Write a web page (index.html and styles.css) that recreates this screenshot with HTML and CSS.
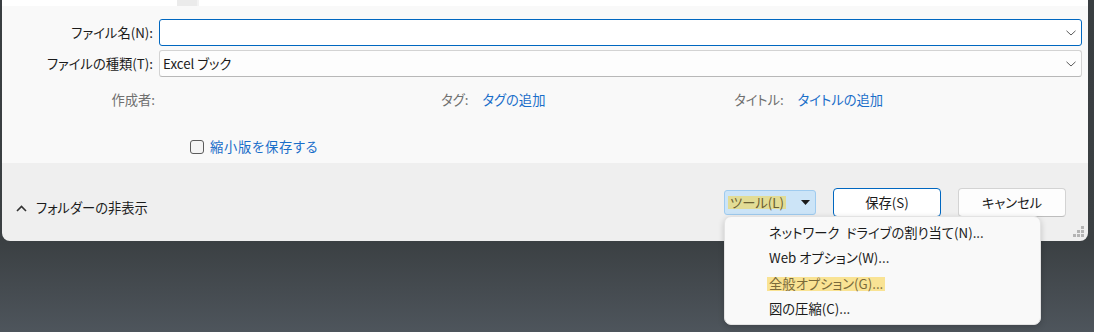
FILE: index.html
```html
<!DOCTYPE html>
<html lang="ja">
<head>
<meta charset="utf-8">
<title>名前を付けて保存</title>
<link rel="stylesheet" href="styles.css">
</head>
<body>
<div class="window">
  <div class="topstrip">
    <div class="ts-white"></div><div class="ts-thumb"></div><div class="ts-line"></div><div class="ts-rest"></div>
  </div>
  <div class="panel">
    <div class="field-row">
      <label class="field-label">ファイル名(N):</label>
      <div class="combo focused">
        <span class="combo-text"></span>
        <svg class="chev" width="10" height="6" viewBox="0 0 10 6"><path d="M0.5 0.8 L5 5 L9.5 0.8" fill="none" stroke="#5a5a5a" stroke-width="1"/></svg>
      </div>
    </div>
    <div class="field-row">
      <label class="field-label">ファイルの種類(T):</label>
      <div class="combo">
        <span class="combo-text">Excel ブック</span>
        <svg class="chev" width="10" height="6" viewBox="0 0 10 6"><path d="M0.5 0.8 L5 5 L9.5 0.8" fill="none" stroke="#5a5a5a" stroke-width="1"/></svg>
      </div>
    </div>
    <div class="meta-row">
      <span class="meta-label first">作成者:</span>
      <span class="meta-empty"></span>
      <span class="meta-group"><span class="meta-label">タグ:</span><span class="link">タグの追加</span></span>
      <span class="meta-group"><span class="meta-label">タイトル:</span><span class="link">タイトルの追加</span></span>
    </div>
    <div class="thumb-row">
      <span class="checkbox"></span><span class="link thumb-link">縮小版を保存する</span>
    </div>
  </div>
  <div class="footer">
    <div class="toggle">
      <svg class="chev-up" width="11" height="7" viewBox="0 0 11 7"><path d="M1 6 L5.5 1.5 L10 6" fill="none" stroke="#333" stroke-width="1.6"/></svg>
      <span>フォルダーの非表示</span>
    </div>
    <div class="actions">
      <div class="tools-wrap">
        <div class="tools">
          <span class="hl-tools">ツール(L)</span>
          <svg class="tri" width="9" height="5" viewBox="0 0 9 5"><path d="M0 0 H9 L4.5 5 Z" fill="#1a1a1a"/></svg>
        </div>
        <div class="menu">
          <div class="menu-item">ネットワーク&ensp;ドライブの割り当て(N)...</div>
          <div class="menu-item">Web オプション(W)...</div>
          <div class="menu-item"><span class="hl-menu">全般オプション(G)...</span></div>
          <div class="menu-item">図の圧縮(C)...</div>
        </div>
      </div>
      <div class="btn primary">保存(S)</div>
      <div class="btn">キャンセル</div>
    </div>
  </div>
  <svg class="grip" width="14" height="12" viewBox="0 0 14 12">
    <rect x="10" y="0" width="3" height="3" fill="#b4b4b4"/>
    <rect x="6" y="4" width="3" height="3" fill="#b4b4b4"/>
    <rect x="10" y="4" width="3" height="3" fill="#b4b4b4"/>
    <rect x="2" y="8" width="3" height="3" fill="#b4b4b4"/>
    <rect x="6" y="8" width="3" height="3" fill="#b4b4b4"/>
    <rect x="10" y="8" width="3" height="3" fill="#b4b4b4"/>
  </svg>
</div>
</body>
</html>
```

FILE: styles.css
```css
* { box-sizing: border-box; }

html, body { height: 100%; }

body {
  margin: 0;
  width: 1094px;
  height: 332px;
  overflow: hidden;
  background: linear-gradient(180deg, #393e41 0px, #3b4043 242px, #4e555c 332px);
  font-family: "Noto Sans CJK JP", "Noto Sans", sans-serif;
  font-size: 13.3px;
  font-feature-settings: "palt";
  color: #1b1b1b;
}

.window {
  position: relative;
  margin-left: 2px;
  width: 1086px;
  height: 241px;
  display: flex;
  flex-direction: column;
}

/* top strip (bottom of file list) */
.topstrip {
  display: flex;
  height: 6px;
  background: #ffffff;
}
.ts-white { width: 175px; }
.ts-thumb { width: 20px; background: #ebebeb; }
.ts-line { width: 2px; background: #f3f3f3; }
.ts-rest { flex: 1; }

/* form panel */
.panel {
  height: 157px;
  background: #f9f9f9;
  padding: 13px 6px 0 0;
  display: flex;
  flex-direction: column;
}

.field-row {
  display: flex;
  align-items: center;
  gap: 6px;
  margin-bottom: 4px;
}

.field-label {
  width: 151px;
  text-align: right;
  line-height: 20px;
  white-space: nowrap;
}

.combo {
  flex: 1;
  height: 27px;
  display: flex;
  align-items: center;
  justify-content: space-between;
  background: #fdfdfd;
  border: 1px solid #d3d3d3;
  border-bottom-color: #b8b8b8;
  border-radius: 3px;
  padding: 0 5px 0 3px;
}
.combo.focused {
  background: #ffffff;
  border-color: #0067c0;
}
.combo-text {
  line-height: 20px;
  color: #1b1b1b;
}
.chev { display: block; }

.meta-row {
  display: grid;
  grid-template-columns: 153px 286px 293px 1fr;
  margin-top: 9px;
  line-height: 20px;
  color: #707070;
}
.meta-label { white-space: nowrap; }
.meta-label.first { text-align: right; }
.meta-group {
  display: flex;
  gap: 14px;
}
.link { color: #1a6ec9; white-space: nowrap; }

.thumb-row {
  display: flex;
  align-items: center;
  gap: 6px;
  margin-top: 27px;
  padding-left: 188px;
  line-height: 20px;
}
.thumb-link { letter-spacing: 0.7px; }
.checkbox {
  width: 14px;
  height: 14px;
  border: 1px solid #5c5c5c;
  border-radius: 3px;
  background: #f4f4f4;
}

/* footer */
.footer {
  flex: 1;
  background: #efefef;
  border-radius: 0 0 8px 8px;
  display: flex;
  justify-content: space-between;
  align-items: flex-start;
  padding: 25px 22px 0 14px;
}

.toggle {
  display: flex;
  align-items: center;
  gap: 9px;
  margin-top: 10px;
  line-height: 20px;
}
.chev-up { display: block; }

.actions {
  display: flex;
  align-items: flex-start;
  gap: 17px;
}

.tools-wrap {
  position: relative;
  margin-top: 2px;
}
.tools {
  width: 92px;
  height: 25px;
  background: #cce4f7;
  border: 1px solid #9fcbef;
  border-radius: 3px;
  display: flex;
  align-items: center;
  justify-content: space-between;
  padding: 0 4px 0 3px;
}
.hl-tools {
  background: #e2dc95;
  color: #6a5f33;
  line-height: 13px;
  padding: 0 2px;
}
.tri { display: block; margin-right: 1px; }

.btn {
  width: 108px;
  height: 29px;
  display: flex;
  align-items: center;
  justify-content: center;
  background: #fdfdfd;
  border: 1px solid #d3d3d3;
  border-bottom-color: #bdbdbd;
  border-radius: 4px;
  color: #1b1b1b;
}
.btn.primary {
  background: #ffffff;
  border-color: #0067c0;
}

/* dropdown menu */
.menu {
  position: absolute;
  top: 26px;
  left: 0;
  width: 317px;
  height: 109px;
  background: #f9f9f9;
  border: 1px solid #e3e3e3;
  border-radius: 7px;
  box-shadow: 0 2px 6px rgba(0, 0, 0, 0.18);
  padding: 3px 0 0 44px;
  z-index: 10;
}
.menu-item {
  height: 25.3px;
  line-height: 25.3px;
  white-space: nowrap;
  color: #1b1b1b;
}
.hl-menu {
  background: #f9e394;
  color: #7a6a3a;
  margin-left: -2px;
  padding: 0 2px;
  line-height: 14px;
  display: inline-block;
}

.grip {
  position: absolute;
  right: 3px;
  bottom: 3px;
  display: block;
}
```
